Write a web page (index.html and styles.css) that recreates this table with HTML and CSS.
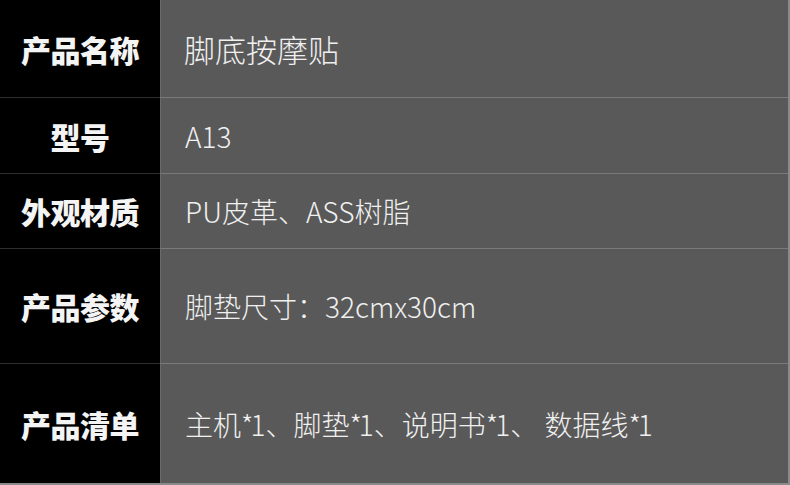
FILE: index.html
```html
<!DOCTYPE html>
<html lang="zh-CN">
<head>
    <meta charset="UTF-8">
    <title>产品信息</title>
    <link rel="stylesheet" href="styles.css">
</head>
<body>
    <div class="spec-table">
        <div class="spec-row">
            <div class="spec-label">产品名称</div>
            <div class="spec-value spec-value-big">脚底按摩贴</div>
        </div>
        <div class="spec-row">
            <div class="spec-label">型号</div>
            <div class="spec-value">A13</div>
        </div>
        <div class="spec-row">
            <div class="spec-label">外观材质</div>
            <div class="spec-value">PU皮革、ASS树脂</div>
        </div>
        <div class="spec-row">
            <div class="spec-label">产品参数</div>
            <div class="spec-value">脚垫尺寸：32cmx30cm</div>
        </div>
        <div class="spec-row">
            <div class="spec-label">产品清单</div>
            <div class="spec-value">主机<span class="qty">*1</span>、脚垫<span class="qty">*1</span>、说明书<span class="qty">*1</span>、 数据线<span class="qty">*1</span></div>
        </div>
    </div>
</body>
</html>
```

FILE: styles.css
```css
body {
    margin: 0;
    background: #595959;
    font-family: "Noto Sans CJK SC", "Noto Sans", sans-serif;
}

.spec-table {
    width: 788px;
    height: 483px;
    border-right: 2px solid #8a8a8a;
    border-bottom: 2px solid #8a8a8a;
    display: grid;
    grid-template-rows: 97px 76px 75px 115px 120px;
}

.spec-row {
    display: grid;
    grid-template-columns: 160px 1fr;
}

.spec-row + .spec-row .spec-label {
    border-top: 1px solid #2e2e2e;
}

.spec-row + .spec-row .spec-value {
    border-top: 1px solid #7a7a7a;
}

.spec-label {
    background: #000;
    color: #f4f4f4;
    font-size: 30px;
    font-weight: 900;
    display: flex;
    align-items: center;
    justify-content: center;
    letter-spacing: -0.5px;
}

.spec-value {
    background: #595959;
    color: #f0f0f0;
    font-size: 28px;
    font-weight: 300;
    display: flex;
    align-items: center;
    padding-left: 24px;
    border-left: 1px solid #6a6a6a;
    white-space: pre;
}

.spec-value-big {
    font-size: 31px;
    padding-left: 23px;
}

.qty {
    letter-spacing: -3px;
    margin-right: 3px;
}
```
